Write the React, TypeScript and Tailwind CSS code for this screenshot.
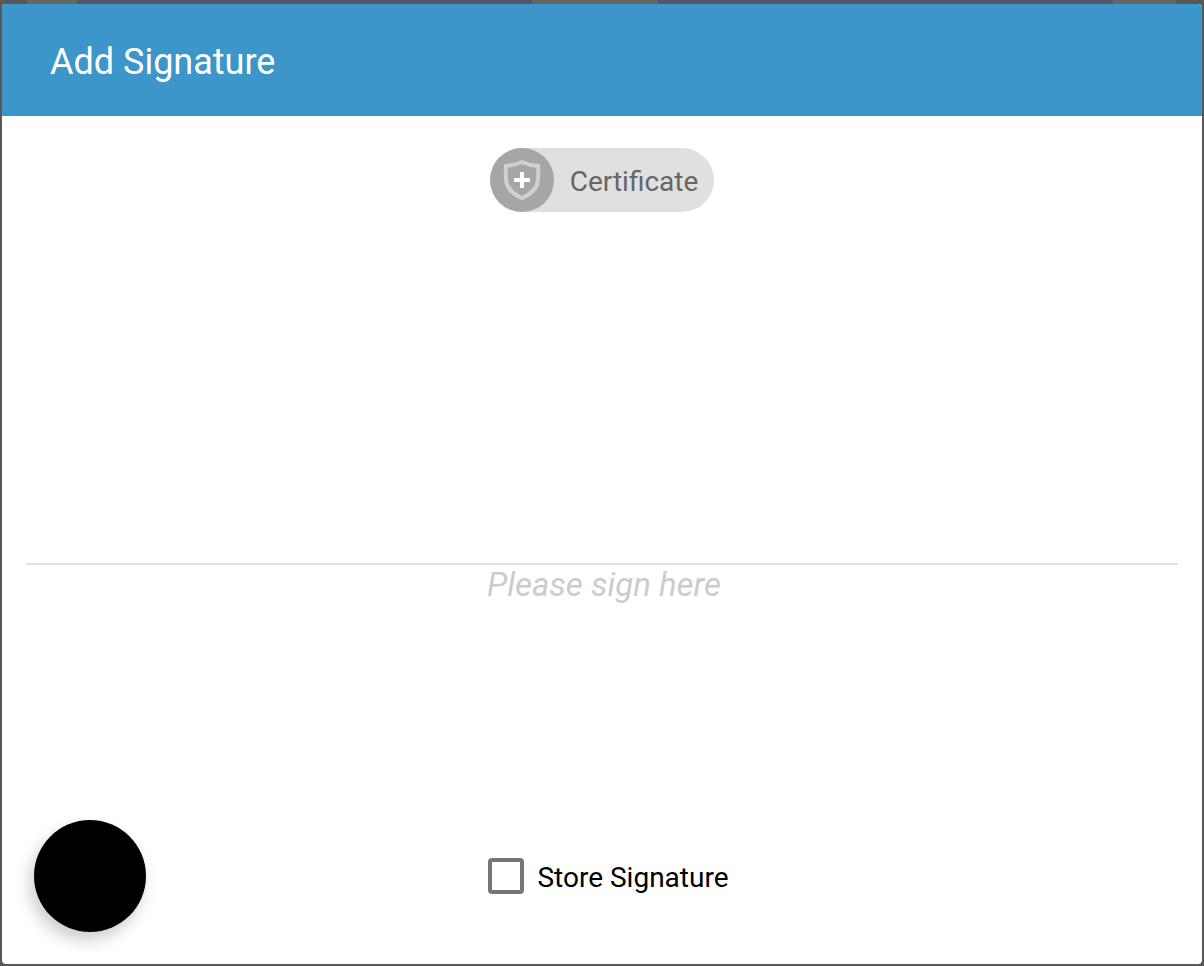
import { useState } from "react";

function ShieldPlusIcon() {
  return (
    <svg viewBox="0 0 48 48" className="size-12" fill="none" aria-hidden="true">
      <path
        d="M24 6 Q31.500 9.400 40 10 C40.300 15 40.400 20 39.800 25 C38.800 33 32.500 38.400 24 42 C15.500 38.400 9.200 33 8.200 25 C7.600 20 7.700 15 8 10 Q16.500 9.400 24 6 Z"
        stroke="#d0d0d0"
        strokeWidth="4"
      />
      <path d="M22 16 h4 v6 h6 v4 h-6 v6 h-4 v-6 h-6 v-4 h6 Z" fill="#fff" />
    </svg>
  );
}

export default function App() {
  const [store, setStore] = useState(false);

  return (
    <div
      className="flex min-h-screen flex-col bg-[#585858]"
      style={{ fontFamily: 'Roboto, "Liberation Sans", sans-serif' }}
    >
      <div className="flex h-1 shrink-0" aria-hidden="true">
        <div className="w-[27px]" />
        <div className="w-[50px] bg-[#666662]" />
        <div className="flex-1 bg-[#54566a]" />
        <div className="w-[126px] bg-[#666762]" />
        <div className="flex-1 bg-[#54566a]" />
        <div className="w-[63px] bg-[#666666]" />
        <div className="w-[28px]" />
      </div>

      <div
        role="dialog"
        aria-labelledby="dialog-title"
        className="mx-0.5 mb-0.5 flex flex-1 flex-col overflow-hidden rounded bg-white"
      >
        <header className="flex h-28 shrink-0 items-center bg-[#3c96ca] px-12">
          <h1 id="dialog-title" className="pt-1 text-[36px] leading-10 text-white">
            Add Signature
          </h1>
        </header>

        <main className="flex flex-1 flex-col pt-8 pb-8">
          <button
            type="button"
            className="flex h-16 items-center gap-4 self-center rounded-full bg-[#e0e0e0] pr-4 text-[28px] leading-8 text-[#666666]"
          >
            <span className="flex size-16 items-center justify-center rounded-full bg-[#a6a6a6]">
              <ShieldPlusIcon />
            </span>
            <span className="pt-1">Certificate</span>
          </button>

          <div className="flex flex-1 flex-col px-6">
            <div className="grow-[11] basis-[0px]" />
            <div className="grow-[8] basis-[0px] border-t-2 border-[#e2e2e2] text-center">
              <p className="pl-1 text-[33px] leading-10 text-[#cccccc] italic">Please sign here</p>
            </div>
          </div>

          <div className="grid grid-cols-[1fr_auto_1fr] items-center px-8">
            <button
              type="button"
              aria-label="Ink color"
              className="size-28 rounded-full bg-black shadow-[-4px_8px_16px_rgba(0,0,0,0.2)]"
            />
            <label className="flex items-center gap-[13px] pl-[13px] text-[28px] leading-8 text-black">
              <input
                type="checkbox"
                checked={store}
                onChange={(e) => setStore(e.target.checked)}
                className="size-9 appearance-none rounded border-4 border-[#757575] bg-white checked:bg-[#3c96ca]"
              />
              <span className="pt-1">Store Signature</span>
            </label>
          </div>
        </main>
      </div>
    </div>
  );
}
